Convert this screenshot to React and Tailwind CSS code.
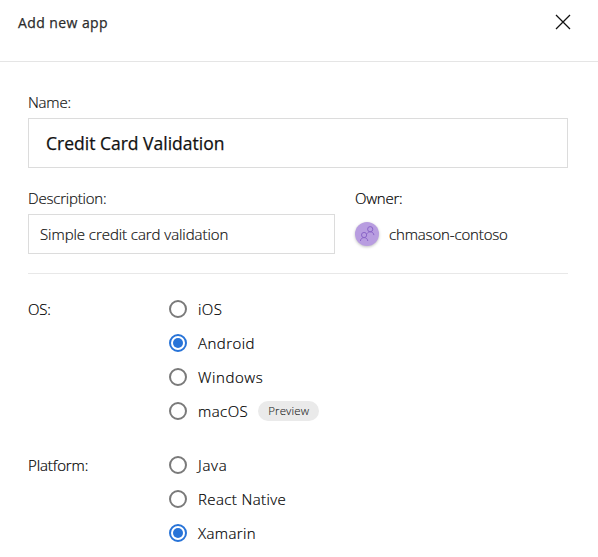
function Radio({ label, checked, tracking, children }) {
  return (
    <label className="flex h-[34px] items-center">
      <span
        className={
          checked
            ? "flex size-[18px] shrink-0 items-center justify-center rounded-full border-2 border-[#2874d8]"
            : "size-[18px] shrink-0 rounded-full border-2 border-[#7a7a7a]"
        }
      >
        {checked && <span className="size-[10px] rounded-full bg-[#2874d8]" />}
      </span>
      <span className={`ml-[11px] whitespace-nowrap ${tracking}`}>{label}</span>
      {children}
    </label>
  );
}

function PeopleIcon() {
  return (
    <svg viewBox="0 0 24 24" className="size-6" fill="none" stroke="#8a64c8" strokeWidth="1">
      <circle cx="9.1" cy="13" r="2.6" />
      <path d="M5.4 19c.2-2.1 1.7-3.4 3.7-3.4s3.5 1.3 3.7 3.4" />
      <circle cx="15.2" cy="7.2" r="2.6" />
      <path d="M12.1 11.6c.7-1.2 1.8-1.8 3.1-1.8 2 0 3.5 1.3 3.7 3.3" />
    </svg>
  );
}

export default function App() {
  return (
    <div className="h-[557px] w-[598px] overflow-hidden bg-white font-['Open_Sans','Noto_Sans',sans-serif] text-[15px] leading-5 font-light text-[#111] [-webkit-text-stroke:0.2px_currentColor]">
      <header className="flex h-[62px] items-start justify-between border-b border-[#e5e5e5] pt-[13px] pr-[27px] pl-[18px]">
        <h1 className="text-[14px] font-medium tracking-[0.42px] text-[#2b2b2b] [-webkit-text-stroke:0.25px_currentColor]">
          Add new app
        </h1>
        <svg viewBox="0 0 16 16" className="mt-px size-4" fill="none" stroke="#111" strokeWidth="1.3">
          <path d="M1 1l14 14M15 1L1 15" />
        </svg>
      </header>
      <main className="pr-[30px] pl-7">
        <div className="pt-[30px]">
          <div className="h-5 tracking-[-0.2px]">Name:</div>
          <div className="mt-[6px] flex h-[50px] items-center border border-[#dcdcdc] pl-[17px] text-[17.5px] font-medium [-webkit-text-stroke:0.25px_currentColor]">
            Credit Card Validation
          </div>
        </div>
        <div className="mt-5 flex gap-5 border-b border-[#e8e8e8] pb-[19px]">
          <div className="w-[307px]">
            <div className="h-5 tracking-[-0.2px]">Description:</div>
            <div className="mt-[6px] flex h-10 items-center border border-[#dcdcdc] pl-[11px] tracking-[-0.06px]">
              Simple credit card validation
            </div>
          </div>
          <div>
            <div className="h-5 tracking-[-0.25px] text-black">Owner:</div>
            <div className="mt-[6px] flex h-10 items-center gap-[10px]">
              <span className="size-6 rounded-full bg-[#b89de0] shadow-[0_1px_3px_rgba(0,0,0,0.25)] [-webkit-text-stroke:0]">
                <PeopleIcon />
              </span>
              <span className="tracking-[-0.15px]">chmason-contoso</span>
            </div>
          </div>
        </div>
        <div className="mt-[18px] flex text-black">
          <div className="w-[141px] pt-[7px] tracking-[-0.2px]">OS:</div>
          <div>
            <Radio label="iOS" tracking="tracking-[0.4px]" />
            <Radio label="Android" checked tracking="tracking-[0.46px]" />
            <Radio label="Windows" tracking="tracking-[0.6px]" />
            <Radio label="macOS" tracking="tracking-[0.45px]">
              <span className="ml-[10px] flex h-5 items-center rounded-full bg-[#eaeaea] px-[10px] text-[11.5px] font-light tracking-[0.12px] text-[#222] [-webkit-text-stroke:0.1px_currentColor]">
                Preview
              </span>
            </Radio>
          </div>
        </div>
        <div className="mt-5 flex text-black">
          <div className="w-[141px] pt-[7px] tracking-[-0.1px]">Platform:</div>
          <div>
            <Radio label="Java" tracking="tracking-[0.7px]" />
            <Radio label="React Native" tracking="tracking-[0.4px]" />
            <Radio label="Xamarin" checked tracking="tracking-[0.4px]" />
          </div>
        </div>
      </main>
    </div>
  );
}
